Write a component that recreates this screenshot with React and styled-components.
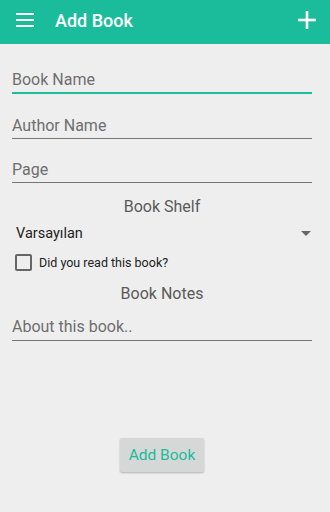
import React from 'react';
import styled, { createGlobalStyle } from 'styled-components';

const Global = createGlobalStyle`
  html, body {
    margin: 0;
    padding: 0;
    background: #eeeeee;
    font-family: Roboto, "Noto Sans", sans-serif;
  }
`;

const Screen = styled.div`
  width: 330px;
  height: 512px;
  background: #eeeeee;
  display: flex;
  flex-direction: column;
`;

const AppBar = styled.div`
  height: 44px;
  background: #1abc9c;
  display: flex;
  align-items: center;
  padding: 0 14px 4px 16px;
  box-sizing: border-box;
  color: #fff;
`;

const Title = styled.div`
  font-size: 18px;
  font-weight: 500;
  margin-left: 21px;
  flex: 1;
`;

const Form = styled.div`
  display: flex;
  flex-direction: column;
  padding: 0 18px 0 12px;
`;

const Field = styled.div`
  height: ${(p) => (p.$focused ? '26px' : '27px')};
  margin-top: ${(p) => p.$top}px;
  border-bottom: ${(p) => (p.$focused ? '2px solid #1abc9c' : '1px solid #757575')};
  font-size: 16px;
  color: #6f6f6f;
  display: flex;
  align-items: flex-end;
  padding-bottom: ${(p) => p.$pad ?? 3}px;
  box-sizing: content-box;
  line-height: 19px;
`;

const Heading = styled.div`
  text-align: center;
  font-size: 16px;
  color: #5a5a5a;
  margin-top: ${(p) => p.$top}px;
  line-height: 19px;
`;

const Spinner = styled.div`
  display: flex;
  align-items: center;
  justify-content: space-between;
  margin-top: 7px;
  padding: 0 0 0 4px;
  height: 20px;
  font-size: 14.5px;
  color: #222;
`;

const Caret = styled.div`
  width: 0;
  height: 0;
  border-left: 5px solid transparent;
  border-right: 5px solid transparent;
  border-top: 5px solid #666;
  margin-right: 1px;
`;

const CheckRow = styled.label`
  display: flex;
  align-items: center;
  margin-top: 10px;
  padding-left: 3px;
  font-size: 12.5px;
  color: #222;
  height: 18px;
`;

const Box = styled.span`
  width: 13px;
  height: 13px;
  border: 2px solid #666;
  border-radius: 2px;
  margin-right: 7px;
`;

const ButtonWrap = styled.div`
  display: flex;
  justify-content: center;
  margin-top: 97px;
  padding-right: 6px;
`;

const Button = styled.button`
  width: 84px;
  height: 34px;
  background: #d6d7d7;
  border: none;
  border-radius: 2px;
  box-shadow: 0 1px 2px rgba(0, 0, 0, 0.25);
  color: #1abc9c;
  font-family: Roboto, sans-serif;
  font-size: 15.5px;
  padding: 0;
`;

function Menu() {
  return (
    <svg width="18" height="14" viewBox="0 0 18 14">
      <rect x="0" y="0" width="18" height="2" fill="#fff" />
      <rect x="0" y="6" width="18" height="2" fill="#fff" />
      <rect x="0" y="12" width="18" height="2" fill="#fff" />
    </svg>
  );
}

function Plus() {
  return (
    <svg width="18" height="18" viewBox="0 0 18 18">
      <rect x="7.7" y="0" width="2.6" height="18" fill="#fff" />
      <rect x="0" y="7.7" width="18" height="2.6" fill="#fff" />
    </svg>
  );
}

export default function App() {
  return (
    <Screen>
      <Global />
      <AppBar>
        <Menu />
        <Title>Add Book</Title>
        <Plus />
      </AppBar>
      <Form>
        <Field $top={19} $focused>Book Name</Field>
        <Field $top={14}>Author Name</Field>
        <Field $top={13}>Page</Field>
        <Heading $top={14}>Book Shelf</Heading>
        <Spinner>
          <span>Varsayılan</span>
          <Caret />
        </Spinner>
        <CheckRow>
          <Box />
          Did you read this book?
        </CheckRow>
        <Heading $top={13}>Book Notes</Heading>
        <Field $top={6} $pad={4}>About this book..</Field>
      </Form>
      <ButtonWrap>
        <Button>Add Book</Button>
      </ButtonWrap>
    </Screen>
  );
}
